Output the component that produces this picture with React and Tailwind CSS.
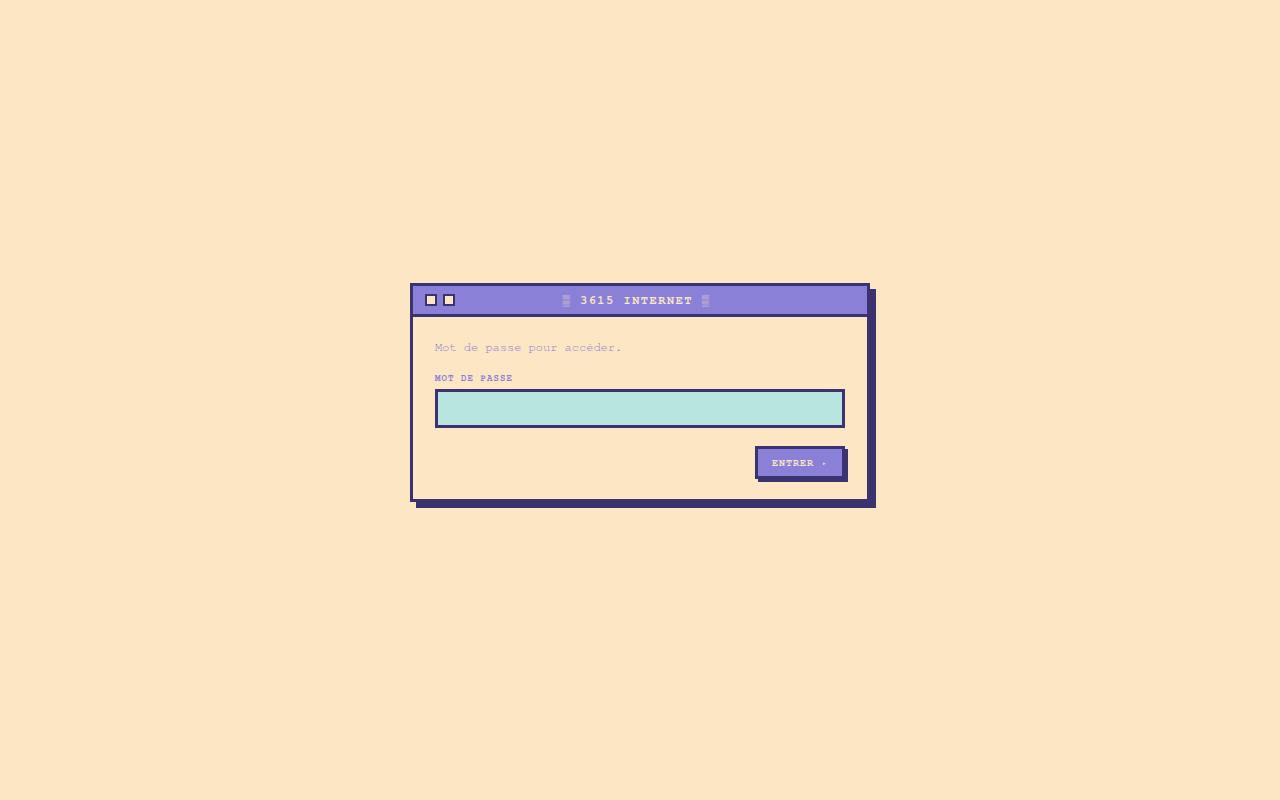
import React, { useState } from 'react';

const mono = { fontFamily: '"Nimbus Mono L", "TeX Gyre Cursor", "Courier 10 Pitch", "Nimbus Mono PS", "FreeMono", "Liberation Mono", monospace' };

const TitleBar = () => (
  <div className="relative h-[31px] bg-[#8b80d8] border-b-[3px] border-[#3b3370] flex items-center px-3">
    {/* window buttons */}
    <div className="flex gap-[6px]">
      <span className="block w-[12px] h-[12px] bg-[#fce6c4] border-2 border-[#3b3370]"></span>
      <span className="block w-[12px] h-[12px] bg-[#fce6c4] border-2 border-[#3b3370]"></span>
    </div>
    <div className="absolute inset-0 flex items-center justify-center pr-[7px] pb-[2px]">
      <span className="text-[12px] leading-none font-bold tracking-[1.5px] text-[#fce6c4]">
        ▒ 3615 INTERNET ▒
      </span>
    </div>
  </div>
);

const App = () => {
  const [password, setPassword] = useState('');

  return (
    <div className="min-h-screen bg-[#fce6c4] flex items-center justify-center pb-[16px]" style={mono}>
      <div className="w-[460px] bg-[#fce6c4] border-[3px] border-[#3b3370] shadow-[6px_6px_0_0_#3b3370]">
        <TitleBar />

        {/* Body */}
        <div className="px-[22px] pt-[22px] pb-[20px]">
          <p className="text-[12px] leading-[16px] text-[#8b80d8] mb-[17px]">
            Mot de passe pour accéder.
          </p>
          <label className="block text-[9px] leading-[12px] font-bold tracking-[1.1px] text-[#8b80d8] mb-[5px]">
            MOT DE PASSE
          </label>
          <input
            type="password"
            value={password}
            onChange={(e) => setPassword(e.target.value)}
            className="block w-full h-[39px] bg-[#b8e5e0] border-[3px] border-[#3b3370] outline-none px-2 text-[#3b3370] text-[12px]"
          />
          <div className="flex justify-end mt-[18px]">
            <button className="h-[33px] px-[14px] bg-[#8b80d8] border-[3px] border-[#3b3370] shadow-[3px_3px_0_0_#3b3370] text-[10px] font-bold tracking-[1px] text-[#fce6c4]">
              ENTRER ▸
            </button>
          </div>
        </div>
      </div>
    </div>
  );
};

export default App;
